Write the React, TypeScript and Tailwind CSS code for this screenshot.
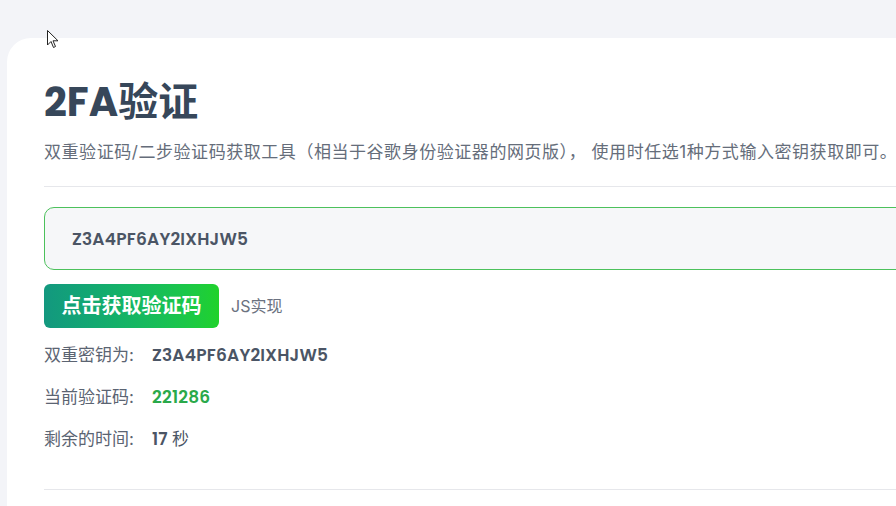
import { useState } from 'react';

const SECRET = 'Z3A4PF6AY2IXHJW5';

const LATIN = "font-['Poppins','Inter','Noto_Sans_CJK_SC',sans-serif]";

function Row({ label, children }: { label: string; children: React.ReactNode }) {
  return (
    <div className="flex items-center h-[42px]">
      <span className="w-[108px] text-[17px] text-[#5b6472]">{label}</span>
      {children}
    </div>
  );
}

export default function App() {
  const [secret, setSecret] = useState(SECRET);

  return (
    <div className="relative h-[506px] w-[896px] overflow-hidden bg-[#f3f4f8] font-['Inter','Noto_Sans_CJK_SC',sans-serif]">
      {/* mouse pointer from the capture */}
      <svg className="absolute left-[47px] top-[30px]" width="12" height="19" viewBox="0 0 12 19">
        <path d="M0.5 0.5 L0.5 15 L4 11.5 L6.5 17.5 L8.5 16.5 L6 10.8 L11 10.8 Z" fill="#fff" stroke="#222" strokeWidth="1" />
      </svg>

      <div className="pt-[38px] pl-[7px]">
        <div className="min-h-[480px] w-[940px] rounded-tl-[24px] bg-white pl-[37px] pt-[40px]">
          <h1 className={`text-[40px] font-bold leading-[48px] text-[#37475a] ${LATIN}`}>2FA验证</h1>
          <p className="mt-[14px] text-[17px] leading-[24px] tracking-[0.55px] text-[#656d7a] whitespace-nowrap">
            双重验证码/二步验证码获取工具（相当于谷歌身份验证器的网页版）， 使用时任选1种方式输入密钥获取即可。
          </p>
          <div className="mt-[22px] h-px bg-[#e6e7eb]" />

          <input
            value={secret}
            onChange={(e) => setSecret(e.target.value)}
            className={`mt-[20px] block h-[63px] w-full rounded-[10px] border-[1.5px] border-[#4cc15c] bg-[#f6f7f9] pl-[27px] text-[17px] font-semibold tracking-[0.2px] text-[#4b5565] outline-none ${LATIN}`}
          />

          <div className="mt-[14px] flex items-center gap-[12px]">
            <button className="h-[44px] w-[175px] rounded-[6px] bg-gradient-to-r from-[#13987f] to-[#20d22a] text-[20px] font-bold text-white">
              点击获取验证码
            </button>
            <span className="text-[16px] text-[#6b7280]">JS实现</span>
          </div>

          <div className="mt-[7px] flex flex-col">
            <Row label="双重密钥为:">
              <span className={`text-[17px] font-semibold tracking-[0.2px] text-[#4b5565] ${LATIN}`}>{secret}</span>
            </Row>
            <Row label="当前验证码:">
              <span className={`text-[17px] font-semibold tracking-[0.2px] text-[#2aa94a] ${LATIN}`}>221286</span>
            </Row>
            <Row label="剩余的时间:">
              <span className={`text-[17px] text-[#4b5565] ${LATIN}`}>
                <b className="font-semibold">17</b> 秒
              </span>
            </Row>
          </div>

          <div className="mt-[28px] h-px bg-[#e6e7eb]" />
        </div>
      </div>
    </div>
  );
}
